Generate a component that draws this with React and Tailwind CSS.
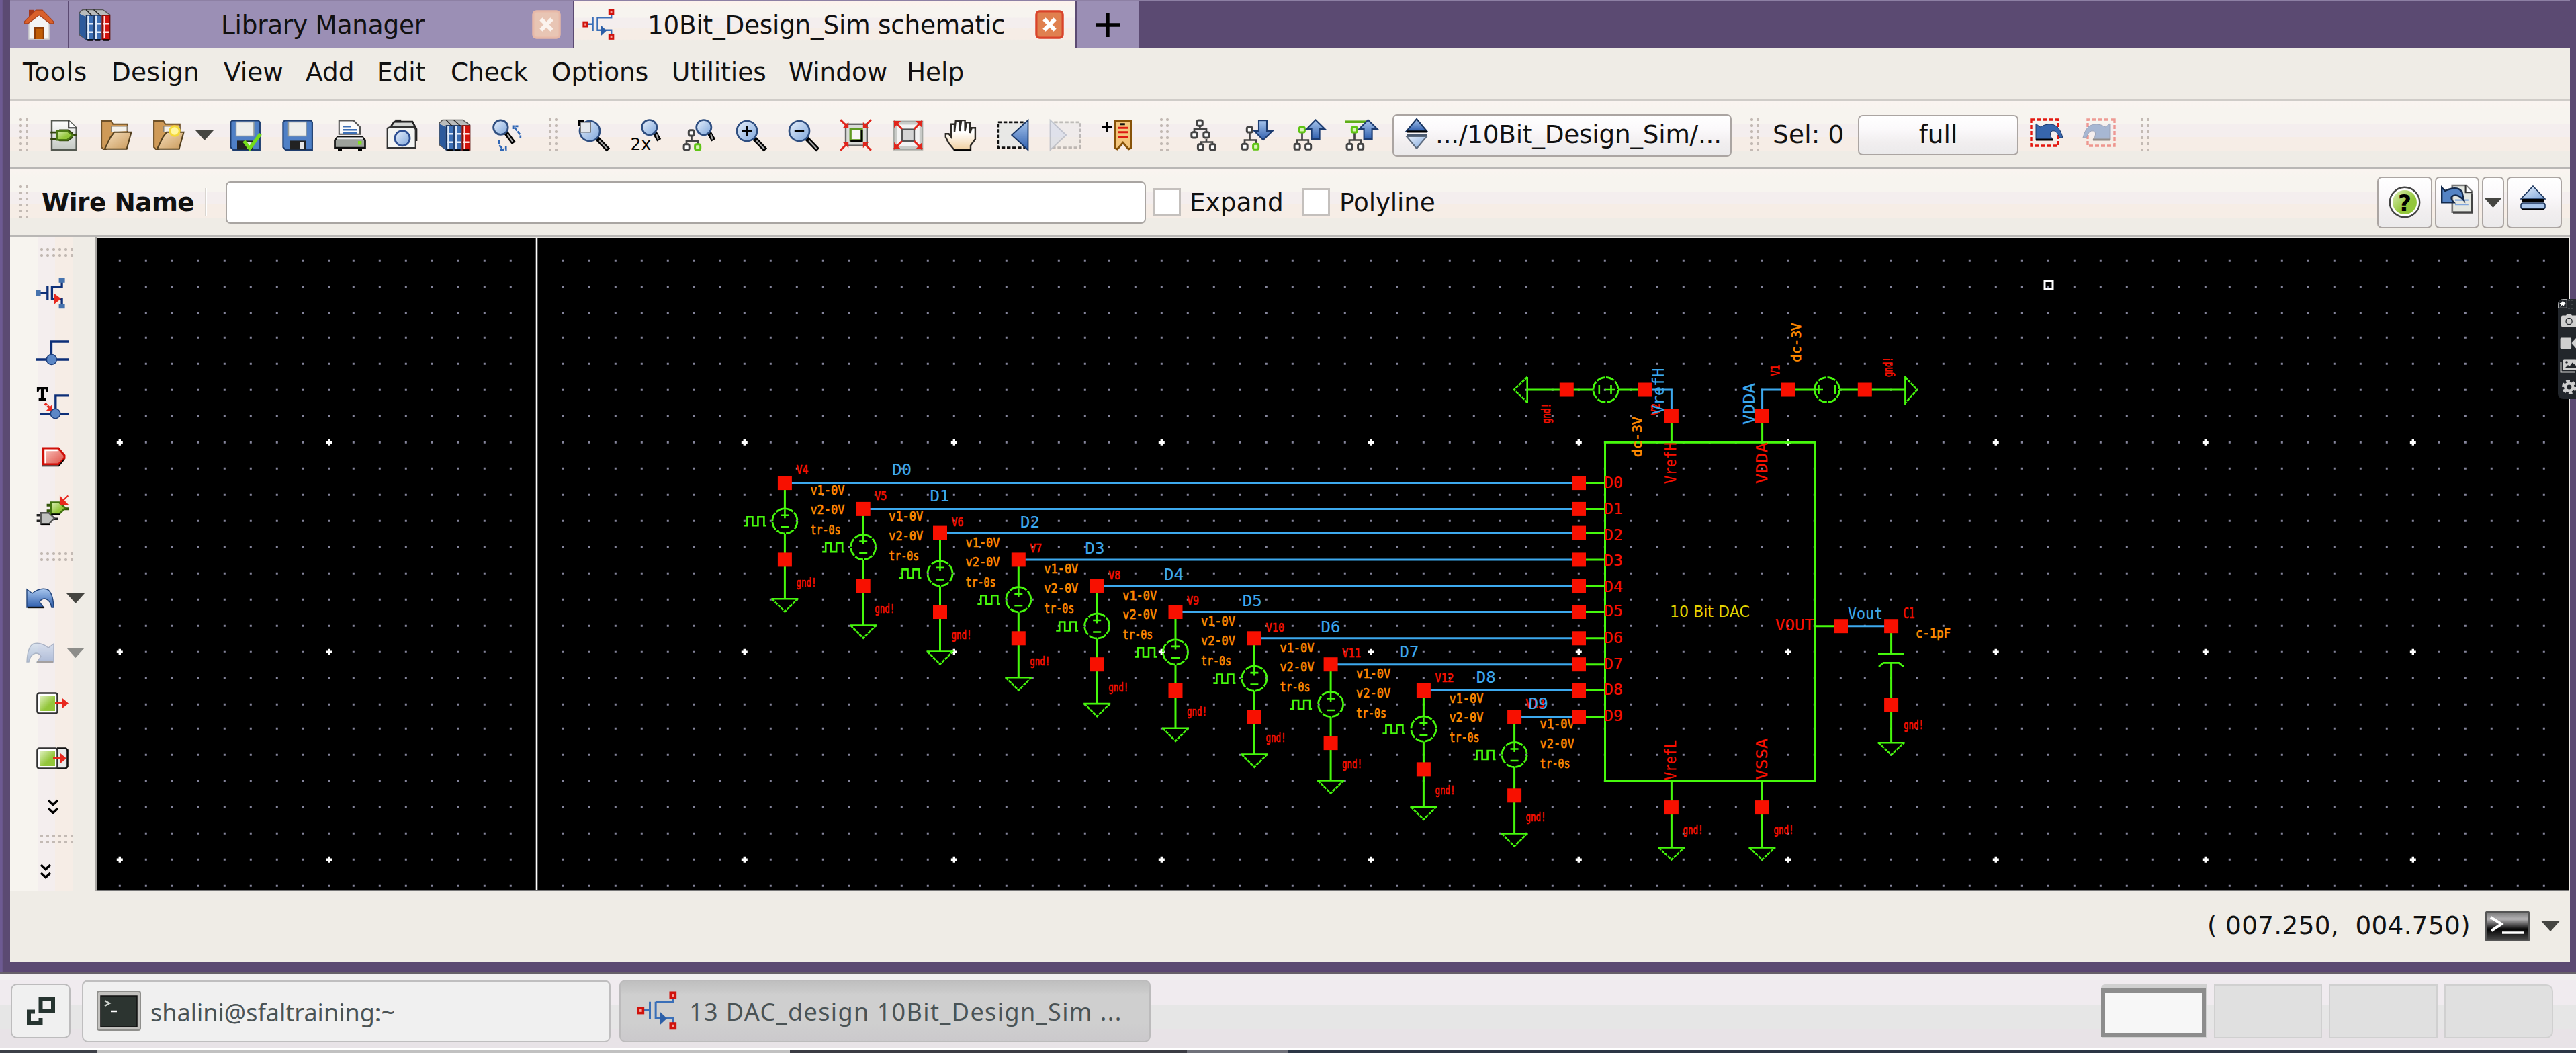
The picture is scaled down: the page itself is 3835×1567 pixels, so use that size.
import React from "react";

const BAND_Y =
  "bg-[linear-gradient(to_bottom,#faf4f0_0%,#f7f4ef_12%,#f7f4ef_35%,#f4eeee_35%,#f4eeee_54%,#f6ede6_54%,#f6ede6_74%,#efece6_74%)]";
const BAND_TAB =
  "bg-[linear-gradient(to_bottom,#fdf2ec_0%,#f7f4ef_14%,#f7f4ef_34%,#f4eeee_36%,#f4eeee_56%,#f6ede6_58%,#f6ede6_80%,#efece6_84%)]";
const BAND_X =
  "bg-[linear-gradient(to_right,#f7f4ef_0,#f7f4ef_41px,#f4eeee_41px,#f4eeee_67px,#f6ede6_67px,#f6ede6_93px,#efece6_93px)]";
const BUTTON =
  "shrink-0 border-2 border-[#aba5a2] rounded-[7px] bg-[linear-gradient(to_bottom,#ffffff,#fbf9fb_35%,#f1eeef_70%,#ebeaeb)]";
const UI = "font-['DejaVu_Sans',sans-serif] text-[37.4px] leading-none whitespace-pre text-[#111]";

/* ---------- icons, drawn on a 16 unit grid ---------- */
function Ic({ children, className = "w-12 h-12" }) {
  return (
    <svg viewBox="0 0 16 16" className={"shrink-0 block overflow-visible " + className}>
      {children}
    </svg>
  );
}

const Defs = () => (
  <svg className="absolute w-0 h-0">
    <defs>
      <linearGradient id="blue" x1="0" y1="0" x2="0" y2="1">
        <stop offset="0" stopColor="#a9c7ee" />
        <stop offset="1" stopColor="#2f5fae" />
      </linearGradient>
      <linearGradient id="lens" x1="0" y1="0" x2="1" y2="1">
        <stop offset="0" stopColor="#e9f1fb" />
        <stop offset="1" stopColor="#7ea6dc" />
      </linearGradient>
      <linearGradient id="tan" x1="0" y1="0" x2="1" y2="1">
        <stop offset="0" stopColor="#f6dfbd" />
        <stop offset="1" stopColor="#c99a5b" />
      </linearGradient>
      <linearGradient id="grn" x1="0" y1="0" x2="1" y2="1">
        <stop offset="0" stopColor="#dcefb8" />
        <stop offset="0.6" stopColor="#93c63a" />
      </linearGradient>
      <linearGradient id="redg" x1="0" y1="0" x2="1" y2="1">
        <stop offset="0" stopColor="#fbc9c4" />
        <stop offset="1" stopColor="#dd4a3f" />
      </linearGradient>
      <linearGradient id="silver" x1="0" y1="0" x2="0" y2="1">
        <stop offset="0" stopColor="#ffffff" />
        <stop offset="1" stopColor="#c3c8c2" />
      </linearGradient>
      <linearGradient id="hand" x1="0" y1="0" x2="0" y2="1">
        <stop offset="0.4" stopColor="#ffffff" />
        <stop offset="1" stopColor="#f0cf9e" />
      </linearGradient>
      <linearGradient id="term" x1="0" y1="0" x2="0" y2="1">
        <stop offset="0" stopColor="#777" />
        <stop offset="0.25" stopColor="#b5b3b5" />
        <stop offset="0.6" stopColor="#050505" />
        <stop offset="1" stopColor="#4a4a4a" />
      </linearGradient>
    </defs>
  </svg>
);

const Home = () => (
  <Ic>
    <rect x="3" y="0.6" width="2.6" height="5" fill="#a5381b" />
    <path d="M3 7 L8 3 L13 7 V15 H3Z" fill="#f4f4f4" stroke="#cfcfcf" strokeWidth="0.5" />
    <path d="M0.8 6.3 L6.5 0.7 H9.7 L15.2 6.3 V7.3 L13.5 7.3 L8.1 3.2 L2.6 7.3 H0.8Z" fill="#d9602b" stroke="#a8411d" strokeWidth="0.4" />
    <rect x="5.6" y="9" width="5" height="6" fill="#8d3c07" />
    <rect x="6.5" y="9.9" width="3.4" height="5.1" fill="#c05d06" />
  </Ic>
);

const Books = () => (
  <Ic>
    <path d="M0.4 2 L2 0.5 H12 L15.5 3 V15.4 H4 L0.6 13Z" fill="#b9bcbc" stroke="#555" strokeWidth="0.5" />
    <path d="M0.5 2.5 L3.6 4 V15.4 L0.5 12.6Z" fill="#2c5a9c" />
    {[3.8, 7.7].map((x) => (
      <g key={x}>
        <rect x={x} y="3.3" width="3.5" height="12" fill="#3c6fb4" stroke="#13305e" strokeWidth="0.5" />
        <path d={`M${x + 0.3} 7.4 h3 M${x + 0.3} 11.6 h3 M${x + 1} 3.6 v11.4`} stroke="#dfeaf8" strokeWidth="0.8" />
      </g>
    ))}
    <rect x="11.7" y="3.3" width="3.8" height="12" fill="#d3120c" stroke="#7b0a06" strokeWidth="0.5" />
    <path d="M12 7.4 h3.2 M12 11.6 h3.2 M12.9 3.7 v11" stroke="#ffe1de" strokeWidth="0.8" />
    <path d="M3.7 0.5 l3 3 M7.5 0.5 l3.4 3" stroke="#222" strokeWidth="0.5" />
    <path d="M4.4 15.5 h2.6 M8.2 15.5 h2.6 M12.2 15.5 h2.8" stroke="#000" strokeWidth="0.9" />
  </Ic>
);

const MosRed = ({ className }) => (
  <Ic className={className}>
    <path d="M2.5 7.6 H5 M5.2 4.2 V11 M7.5 4.2 V11 M7.5 4.4 H14.4 V2.5 M7.5 10.6 H14.4 V13" stroke="#3a6fb8" strokeWidth="0.8" fill="none" />
    <path d="M9.2 8.2 L12 10.8 L9.2 13.4Z" fill="#2c5fa8" />
    {[[0.6, 6.7], [13.4, 0.6], [13.4, 12.8]].map(([x, y]) => (
      <rect key={x + "-" + y} x={x} y={y} width="1.9" height="2" fill="#f6a39b" stroke="#d0120c" strokeWidth="0.95" />
    ))}
  </Ic>
);

const Close = ({ dim }) => (
  <Ic className="w-[43px] h-[43px]">
    <rect x="0.7" y="0.7" width="14.6" height="14.6" rx="1.8" fill={dim ? "#e8c5b4" : "#e0804f"} stroke={dim ? "#e7b9a8" : "#d9432a"} strokeWidth="1.2" />
    <path d="M5 5 L11 11 M11 5 L5 11" stroke={dim ? "#fbf3ee" : "#fff"} strokeWidth="2.2" />
  </Ic>
);

const NewDoc = () => (
  <Ic>
    <path d="M2 0.8 H10.4 L14.2 4.4 V15.3 H2Z" fill="url(#silver)" stroke="#555a52" strokeWidth="0.8" />
    <path d="M10.4 0.8 V4.4 H14.2" fill="#fff" stroke="#333" strokeWidth="0.7" />
    <path d="M1.4 6.7 H5 L6 5.6 H10 L12 7 V8 H14.4 M1.4 10 H5 L6 10.6 H10 L12.4 9" stroke="#33440f" strokeWidth="0.9" fill="none" />
    <path d="M4.6 5.9 H9.6 L12.4 8.2 L9.6 10.4 H4.6Z" fill="url(#grn)" stroke="#4c7a14" strokeWidth="0.8" />
  </Ic>
);

const Folder = ({ star }) => (
  <Ic>
    <path d="M0.7 1 H5.4 L6.4 2.6 H13.6 V9 L3 15 H1.6 L0.7 14Z" fill="#cf9a57" stroke="#6e5129" strokeWidth="0.7" />
    <path d="M5.6 6.6 V3.6 H13.4 V6" fill="#f4f1ea" stroke="#8b8272" strokeWidth="0.5" />
    <path d="M2.3 14.9 L5.2 9 L7 6.6 H15.5 L13.2 14.9Z" fill="url(#tan)" stroke="#54401f" strokeWidth="0.7" />
    {star && <circle cx="11" cy="6" r="2.4" fill="#fff7a0" stroke="#f5d93a" strokeWidth="1" />}
  </Ic>
);

const Disk = ({ check }) => (
  <Ic>
    <path d="M0.8 1.6 L1.6 0.8 H14.6 L15.3 1.6 V15.3 H2 L0.8 14Z" fill="#4f80c6" stroke="#1e3d6e" strokeWidth="0.7" />
    <rect x="3.5" y="1.5" width="8.8" height="7" fill="#eceeec" stroke="#9aa09a" strokeWidth="0.5" />
    <rect x="4" y="10.8" width="8" height="4.4" fill="#222" />
    <rect x="9" y="11.6" width="2.2" height="3.2" fill="#e6e6e6" />
    {check && <path d="M7.4 11 L10.2 14.6 L15.6 7.4" stroke="#74dc18" strokeWidth="1.7" fill="none" />}
  </Ic>
);

const Printer = () => (
  <Ic>
    <path d="M2.6 7.6 V0.8 H9.8 L13 4 V7.6Z" fill="#fbfbfb" stroke="#555" strokeWidth="0.7" />
    <path d="M4.4 3.8 h4 M4.4 5.4 h7 M4.4 7 h7" stroke="#3d6fb5" strokeWidth="0.8" />
    <path d="M2 8.8 H14 L15.5 10.6 V14.4 H0.5 V10.6Z" fill="#9da19b" stroke="#111" strokeWidth="0.9" />
    <path d="M1.5 9.6 H14.4" stroke="#eee" strokeWidth="0.9" />
    <rect x="12" y="11" width="1.8" height="1.8" fill="#7fe01c" />
    <path d="M2 15.3 h2 M12 15.3 h2" stroke="#000" strokeWidth="1.3" />
  </Ic>
);

const Camera = () => (
  <Ic>
    <path d="M2.5 3.4 L4 1.4 H13 L15 5 V11" fill="#d3d5d2" stroke="#222" strokeWidth="0.9" />
    <rect x="4.4" y="0.3" width="3" height="1.4" fill="#222" />
    <path d="M0.6 4.6 L2 4 H13.4 L14.6 5 V14.4 H0.6Z" fill="#f3f4f2" stroke="#333" strokeWidth="0.8" />
    <circle cx="8" cy="9.6" r="3.7" fill="url(#lens)" stroke="#2d4f93" strokeWidth="0.9" />
  </Ic>
);

const Mag = ({ cx, cy, r, tx, ty }) => (
  <g>
    <path d={`M${cx + r * 0.7} ${cy + r * 0.7} L${tx} ${ty}`} stroke="#000" strokeWidth="2.3" />
    <path d={`M${cx + r * 0.95} ${cy + r * 0.95} L${tx - 0.5} ${ty - 0.5}`} stroke="#aaa" strokeWidth="0.7" />
    <circle cx={cx} cy={cy} r={r} fill="url(#lens)" stroke="#2f4e80" strokeWidth="0.9" />
  </g>
);

const Search = () => (
  <Ic>
    <Mag cx={4.8} cy={4.2} r={3.6} tx={11.3} ty={12} />
    <path d="M11 5 V3.6 H13.5 M11.6 4.2 L14.6 8 V9.4 M4 10.6 V13 L6 15 M4.6 15.2 H7.4 V13" stroke="#2f66b5" strokeWidth="0.9" fill="none" strokeDasharray="2 0.5" />
  </Ic>
);
const ZoomFit = () => (
  <Ic>
    <Mag cx={6} cy={6} r={5} tx={15.2} ty={15.4} />
    <rect x="1.4" y="1.6" width="5" height="5" fill="#e3e7ec" stroke="#777" strokeWidth="0.5" />
    <path d="M0.5 3.4 V1 H3" stroke="#000" strokeWidth="1" fill="none" />
  </Ic>
);
const Zoom2x = () => (
  <Ic>
    <Mag cx={9.6} cy={4.2} r={3.7} tx={14.4} ty={10.6} />
    <text x="0.2" y="15.2" fontSize="8.4" fontFamily="DejaVu Sans, sans-serif" textLength="10.2" lengthAdjust="spacingAndGlyphs">2x</text>
  </Ic>
);
const Node = ({ x, y, green }) => (
  <rect x={x} y={y} width="2.7" height="2.7" rx="0.8" fill={green ? "#d9f5b5" : "#fff"} stroke={green ? "#5fc414" : "#444"} strokeWidth="1" />
);
const ZoomHier = () => (
  <Ic>
    <Mag cx={10.6} cy={4.2} r={3.7} tx={15.4} ty={10.6} />
    <path d="M4.5 8 V11 M2 13 V11 H7.6 V13" stroke="#444" strokeWidth="0.9" fill="none" />
    <Node x={3.1} y={5.6} />
    <Node x={0.7} y={12.6} />
    <Node x={6.2} y={12.6} green />
  </Ic>
);
const ZoomSign = ({ plus }) => (
  <Ic>
    <Mag cx={6} cy={6} r={5} tx={15.2} ty={15.4} />
    <path d={plus ? "M3.6 6 H8.4 M6 3.6 V8.4" : "M3.6 6 H8.4"} stroke="#000" strokeWidth="1.2" />
  </Ic>
);
const FitAll = () => (
  <Ic>
    <rect x="3" y="2.6" width="10.6" height="10.6" fill="#d9dbd8" stroke="#666" strokeWidth="0.8" />
    <rect x="5.4" y="5" width="5.6" height="5.6" fill="#f6f6f6" stroke="#5f9a21" strokeWidth="1.1" />
    <path d="M11 5.4 V11 H5.4" stroke="#000" strokeWidth="1" fill="none" />
    <path d="M0.4 0.4 L4 4 M15.6 0.4 L12 4 M0.4 15.6 L4 12 M15.6 15.6 L12 12" stroke="#e1251b" strokeWidth="1" />
    <path d="M4.4 4.4 H1.6 L4.4 1.6Z M11.6 4.4 V1.6 L14.4 4.4Z M4.4 11.6 V14.4 L1.6 11.6Z M11.6 11.6 H14.4 L11.6 14.4Z" fill="#e1251b" />
  </Ic>
);
const FitSel = () => (
  <Ic>
    <rect x="0.9" y="1.2" width="14.2" height="14" fill="#c9cbc8" stroke="#a5a8a4" strokeWidth="0.7" />
    <rect x="2.4" y="2.8" width="11.2" height="10.6" fill="#f3f3f3" />
    <rect x="5" y="5.2" width="6" height="5.8" fill="#d5d5d5" stroke="#555" strokeWidth="0.8" />
    <path d="M1 1 L5 5 M15 1 L11 5 M1 15 L5 11 M15 15 L11 11" stroke="#e1251b" strokeWidth="1" />
    <path d="M1 1 H4.4 L1 4.4Z M15 1 V4.4 L11.6 1Z M1 15 V11.6 L4.4 15Z M15 15 H11.6 L15 11.6Z" fill="#e1251b" />
  </Ic>
);
const Hand = () => (
  <Ic>
    <path
      d="M5 15.5 L2 11.8 L0.6 9 V7.4 H2.2 L3.4 9 V2.6 H5 V6.6 L5.6 0.9 H7.6 V6 L8.4 0.7 H10.2 V6 L11 1.8 H12.7 V7 L13.6 4.4 H15.3 V10 L13 13.2 V15.5Z"
      fill="url(#hand)"
      stroke="#2d2a26"
      strokeWidth="0.8"
    />
    <path d="M5 15.5 H13" stroke="#000" strokeWidth="0.9" />
  </Ic>
);
const SelPrev = () => (
  <Ic>
    <rect x="0.6" y="1.6" width="13" height="12.6" fill="#e8e8e6" stroke="#111" strokeWidth="0.9" strokeDasharray="1.8 0.9" />
    <path d="M15.5 0.6 V15.4 L7.4 8Z" fill="url(#blue)" stroke="#163463" strokeWidth="0.6" />
  </Ic>
);
const SelNext = () => (
  <Ic className="w-12 h-12 opacity-35">
    <rect x="2.4" y="1.6" width="13" height="12.6" fill="#e8e8e6" stroke="#555" strokeWidth="0.9" strokeDasharray="1.8 0.9" />
    <path d="M0.5 0.6 V15.4 L8.4 8Z" fill="#b9cbe6" stroke="#5f7393" strokeWidth="0.6" />
  </Ic>
);
const Bookmark = () => (
  <Ic>
    <path d="M0.2 4 H5 M2.6 1.6 V6.4" stroke="#000" strokeWidth="1" />
    <path d="M6.6 1 H14.6 V14.4 L13.4 15 L10.6 11.8 L7.8 15 L6.6 14.4Z" fill="#f3c67c" stroke="#875309" strokeWidth="1" />
    <path d="M8 4.4 h5.2 M8 6.6 h5.2 M8 8.8 h5.2" stroke="#dd1b12" strokeWidth="1" />
    <path d="M9.2 2.6 h2.4" stroke="#111" strokeWidth="1" />
  </Ic>
);
const Hier = () => (
  <Ic>
    <path d="M5.8 3 V5 M3 7.6 V5 H9 V8 M9 10 V11.5 M6.4 13.4 V11.5 H12 V13.4" stroke="#444" strokeWidth="0.9" fill="none" />
    <Node x={4.4} y={0.7} />
    <Node x={1.6} y={6.6} />
    <Node x={7.6} y={6.6} />
    <Node x={4.8} y={12.6} />
    <Node x={10.8} y={12.6} />
  </Ic>
);
const HierMove = ({ down, top }) => (
  <Ic>
    <path d="M4.5 5.5 V10.5 M2 13 V10.5 H7.6 V13" stroke="#444" strokeWidth="0.9" fill="none" />
    <Node x={3.1} y={4} green={!down} />
    <Node x={0.7} y={12.4} />
    <Node x={6.2} y={12.4} green={down} />
    {top && <path d="M0 1.4 H10" stroke="#5fae18" strokeWidth="1.2" />}
    <path
      d={down ? "M9 0.7 H13 V6 H15.8 L11.2 10.4 L6.8 6 H9Z" : "M9.2 10 H13.2 V5 H15.8 L11.2 0.5 L6.8 5 H9.2Z"}
      fill="url(#blue)"
      stroke="#1d3c70"
      strokeWidth="0.7"
    />
  </Ic>
);
const UpDown = () => (
  <svg viewBox="0 0 34 46" className="w-[34px] h-[46px] shrink-0 block">
    <path d="M17 1 L32 19 H2Z" fill="url(#blue)" stroke="#18345f" strokeWidth="2" />
    <path d="M2 20 H32" stroke="#000" strokeWidth="3" />
    <path d="M17 45 L32 27 H2Z" fill="url(#lens)" stroke="#5c6a7d" strokeWidth="2" />
    <path d="M2 25 H32" stroke="#4a5a70" strokeWidth="2" />
  </svg>
);
const SelUndo = ({ redo }) => (
  <svg viewBox="0 0 50 46" className={"w-[50px] h-[46px] shrink-0 block " + (redo ? "-scale-x-100 opacity-40" : "")}>
    <rect x="2" y="3" width="40" height="39" fill="none" stroke="#e3170f" strokeWidth="3.4" strokeDasharray="6 3" />
    <path d="M9 9 L15 14 Q30 6 40 13 Q46 18 49 30 H44 Q40 18 33 20 Q27 23 34 33 H9Z" fill="#3766ad" stroke="#1c3a6c" strokeWidth="1" />
    <path d="M9 33 H34" stroke="#000" strokeWidth="3" />
  </svg>
);

const Mos = () => (
  <Ic>
    <path d="M2 7.6 H5.4 M5.6 4.2 V11.2 M7.8 11 V4.6 H12.7 V2 M7.8 10.6 H12.7 V14" stroke="#0d2f78" strokeWidth="1.1" fill="none" />
    <path d="M9 8 L12.3 10.5 L9 13.2Z" fill="#e8281e" />
    <rect x="0" y="6" width="2.2" height="3.2" fill="#4673ae" />
    <rect x="11.2" y="0.2" width="3" height="2.4" fill="#4673ae" />
    <rect x="11.2" y="13.2" width="3" height="2.2" fill="#4673ae" />
  </Ic>
);
const WireIc = () => (
  <Ic>
    <path d="M0 11 H16 M7.5 11 V2 H16" stroke="#0d2f78" strokeWidth="1.1" fill="none" />
    <circle cx="7.6" cy="11" r="2.5" fill="#5c87c6" stroke="#1d3f7d" strokeWidth="0.5" />
  </Ic>
);
const WireName = () => (
  <Ic>
    <path d="M0.3 0.3 H6 V3 H5.2 L4.6 1.4 H4 V6 H5 V7 H1.2 V6 H2.3 V1.4 H1.6 L1 3 H0.3Z" fill="#000" />
    <path d="M2 13.6 H16 M9.6 13.6 V4.6 H16" stroke="#0d2f78" strokeWidth="1.1" fill="none" />
    <path d="M4.3 8.4 L7 11" stroke="#e8281e" strokeWidth="1.2" strokeDasharray="1.3 0.4" />
    <path d="M8 8.8 V12.2 H4.8Z" fill="#e8281e" />
    <circle cx="9.5" cy="13.5" r="2.4" fill="#5c87c6" stroke="#1d3f7d" strokeWidth="0.5" />
  </Ic>
);
const PinIc = () => (
  <Ic>
    <path d="M3.5 4 H11 L14 7.5 V9 L11 12 H3.5Z" fill="url(#redg)" stroke="#cf0f08" strokeWidth="1" />
    <path d="M4.6 11.4 V5 H10.6" stroke="#fff" strokeWidth="0.8" fill="none" />
    <path d="M3 12.8 H11.2 L14 9.4" stroke="#000" strokeWidth="0.6" fill="none" />
  </Ic>
);
const Plug = () => (
  <Ic>
    <path d="M0.2 10.6 H3 M0.2 13.4 H3 M8 12.4 H11" stroke="#222" strokeWidth="1.2" />
    <path d="M2.4 9.4 H6.2 L9 12 L6.2 15 H2.4Z" fill="#bfc0bf" stroke="#555" strokeWidth="0.8" />
    <path d="M2.4 15.3 H7" stroke="#000" strokeWidth="0.8" />
    <path d="M5.2 5.6 H8 M5.2 8.4 H8 M13 7.4 H16" stroke="#33560a" strokeWidth="1.3" />
    <path d="M7.4 4.2 H11.4 L14.4 7 L11.4 10 H7.4Z" fill="url(#grn)" stroke="#41730e" strokeWidth="0.9" />
    <path d="M7.4 10.2 H12" stroke="#000" strokeWidth="0.8" />
    <path d="M12 1.6 V5 H15.2Z M15.8 0.8 L13 3.6" fill="#e8281e" stroke="#e8281e" strokeWidth="0.7" />
  </Ic>
);
const UndoIc = ({ redo }) => (
  <svg viewBox="0 0 42 32" className={"w-[42px] h-[32px] shrink-0 block " + (redo ? "-scale-x-100 opacity-35" : "")}>
    <path d="M1 3 L9 9 Q20 0 31 3 Q40 7 41 30 H38 Q36 19 28 17 Q22 17 20 22 L26 30 H1Z" fill="url(#blue)" stroke="#23457c" strokeWidth="1.4" />
    <path d="M2 30 H26" stroke="#111" strokeWidth="2.4" />
  </svg>
);
const Caret = ({ dim, className = "w-[27px] h-[15px]" }) => (
  <svg viewBox="0 0 27 15" className={"shrink-0 block " + className}>
    <path d="M0 0 H27 L13.5 15Z" fill={dim ? "#8d8d8a" : "#454541"} />
  </svg>
);
const GreenBox = ({ wide }) => (
  <svg viewBox="0 0 48 33" className="w-12 h-[33px] shrink-0 block">
    {wide && <path d="M31 1.5 H44 L46.5 4 V29 L44 31.5 H31" fill="#e9e9e9" stroke="#111" strokeWidth="2.6" />}
    <rect x="1.5" y="1.5" width="30" height="30" rx="3" fill="#fff" stroke="#333" strokeWidth="2.6" />
    <rect x="6" y="6" width="22" height="22" fill="url(#grn)" />
    <path d={wide ? "M25 16.5 H38" : "M28 16.5 H41"} stroke="#e8281e" strokeWidth="3" />
    <path d={wide ? "M36 9 L45 16.5 L36 24Z" : "M39 9 L48 16.5 L39 24Z"} fill="#e8281e" />
  </svg>
);
const Chevrons = () => (
  <svg viewBox="0 0 16 24" className="w-4 h-6 shrink-0 block">
    <path d="M1 2 L8 8.5 L15 2 M1 14 L8 20.5 L15 14" stroke="#000" strokeWidth="3.6" fill="none" />
  </svg>
);
const Help = () => (
  <Ic>
    <circle cx="8" cy="8" r="7.4" fill="#fff" stroke="#444" strokeWidth="0.8" />
    <circle cx="8" cy="8" r="6" fill="url(#grn)" />
    <text x="8" y="12.2" fontSize="11.5" fontWeight="bold" textAnchor="middle" fontFamily="DejaVu Sans, sans-serif">?</text>
  </Ic>
);
const Restore = () => (
  <Ic>
    <path d="M5.6 1 H12.4 L15.4 4 V14.2 H5.6Z" fill="#e4e7e1" stroke="#777" strokeWidth="0.9" />
    <path d="M12.2 1 V4.4 H15.4" fill="#fff" stroke="#333" strokeWidth="0.7" />
    <path d="M15.4 5 V14.4 H6" stroke="#444" strokeWidth="1" fill="none" />
    <path d="M7 8.2 h6.6 M7 10.4 h6.6" stroke="#7fa6dd" strokeWidth="0.7" />
    <path d="M0.4 2 L2 3.6 Q8 1 10.4 4 L11.4 8.4 Q8 4.6 5.4 6.4 Q4.6 7.6 6.4 9.4 H0.4Z" fill="#5483c4" stroke="#142a4c" strokeWidth="0.8" />
  </Ic>
);
const Eject = () => (
  <svg viewBox="0 0 40 38" className="w-[40px] h-[38px] shrink-0 block">
    <path d="M20 1 L38 20 H2Z" fill="url(#lens)" stroke="#1c355c" strokeWidth="1.6" />
    <path d="M3 22 H37" stroke="#000" strokeWidth="4" />
    <rect x="2" y="26" width="36" height="9" rx="3" fill="#a9c5ea" stroke="#1c355c" strokeWidth="1.6" />
    <path d="M4 35.6 H37" stroke="#000" strokeWidth="2.2" />
  </svg>
);

function Grip({ horizontal }) {
  return (
    <span
      className={
        "shrink-0 block bg-[radial-gradient(circle_at_2px_2px,#c3bab4_1.9px,transparent_2.3px)] bg-[size:9px_9px] " +
        (horizontal ? "w-[52px] h-[15px]" : "w-[15px] h-[51px]")
      }
    />
  );
}

/* ---------- schematic ---------- */
const G = "#46f80c";
const R = "#f81000";
const B = "#3da9ee";
const O = "#ff8a00";
const MONO = "'DejaVu Sans Mono', monospace";

const gridX = (i) => 178.3 + 3 * Math.floor(12.93 * i + 0.62);
const gridY = (j) => 658.3 + 3 * Math.floor(12.93 * j + 0.71);

function GridDots() {
  const dots = [];
  const marks = [];
  for (let i = 0; i <= 93; i++) {
    for (let j = -7; j <= 17; j++) {
      const x = gridX(i);
      const y = gridY(j);
      if (i % 8 === 0 && j % 8 === 0) {
        if (i !== 16) marks.push(`M${x - 4.5} ${y}h9M${x} ${y - 4.5}v9`);
      } else if (i !== 16) {
        dots.push(`M${x - 1.5} ${y}h3`);
      }
    }
  }
  return (
    <>
      <path d={dots.join("")} stroke="#85859c" strokeWidth="3" />
      <path d={marks.join("")} stroke="#ffffff" strokeWidth="3.4" />
    </>
  );
}

const Sq = ({ x, y }) => <rect x={x - 10.5} y={y - 10.5} width="21" height="21" fill={R} />;
const T = ({ x, y, w, c, s = 23, children, rot, a = "middle" }) => (
  <text
    x={x}
    y={y}
    fill={c}
    stroke={c}
    strokeWidth={s < 22 ? 0.7 : 0.2}
    fontSize={s}
    fontFamily={MONO}
    textAnchor={a}
    textLength={w}
    lengthAdjust="spacingAndGlyphs"
    dominantBaseline="central"
    transform={rot ? `rotate(-90 ${x} ${y})` : undefined}
  >
    {children}
  </text>
);
const Gnd = ({ x, y, h = 19 }) => (
  <>
    <path d={`M${x - 20} ${y}H${x + 20}`} stroke={G} strokeWidth="2.6" />
    <path d={`M${x - 19} ${y}L${x} ${y + h}L${x + 19} ${y}`} stroke={G} strokeWidth="2.6" fill="none" strokeDasharray="5 1.2" />
  </>
);
const Circ = ({ x, y }) => <circle cx={x} cy={y} r="18.5" fill="none" stroke={G} strokeWidth="2.8" strokeDasharray="12.6 1.93" />;

/* x, pin y, source y, lower pin y, ground y, source label, wire label, wire label x / y, port label y */
const SOURCES = [
  [1168.4, 718.6, 775.3, 832.9, 891.3, "V4", "D0", 1342.5, 699, 717.5],
  [1285.2, 757.4, 814.1, 871.7, 930.6, "V5", "D1", 1399, 738, 757],
  [1399.5, 793.1, 853.4, 910.5, 969.5, "V6", "D2", 1533.5, 777, 796],
  [1516.3, 832.9, 892.2, 949.8, 1008.3, "V7", "D3", 1630, 816, 834],
  [1633.2, 871.7, 931.5, 988.7, 1047.1, "V8", "D4", 1747.5, 855.2, 873],
  [1750, 910.5, 970.4, 1027.5, 1083.8, "V9", "D5", 1864.3, 894, 909],
  [1867.4, 949.8, 1009.6, 1066.8, 1122.6, "V10", "D6", 1981, 933.3, 949],
  [1981.1, 988.7, 1048, 1105.6, 1161.4, "V11", "D7", 2098, 969.5, 987.5],
  [2119.4, 1027.5, 1084.6, 1144.9, 1200.7, "V12", "D8", 2212.2, 1008, 1026],
  [2254.6, 1066.8, 1123, 1183.8, 1240.4, "V13", "D9", 2290.3, 1046.7, 1064.5],
];

function Source({ d }) {
  const [x, y1, yc, y2, yg, name] = d;
  return (
    <g>
      <path d={`M${x} ${y1}V${yc - 17}M${x} ${yc + 19}V${yg}`} stroke={G} strokeWidth="3" />
      <Circ x={x} y={yc} />
      <path d={`M${x - 6} ${yc - 8.5}h12M${x} ${yc - 17}v13M${x - 6} ${yc + 9}h12`} stroke={G} strokeWidth="2.6" />
      <path d={`M${x - 61} ${yc + 7}h5v-13h8v13h8v-13h9v13h3`} stroke={G} strokeWidth="2.6" fill="none" />
      <Sq x={x} y={y1} />
      <Sq x={x} y={y2} />
      <Gnd x={x} y={yg} />
      <T x={x + 17} y={yc - 76.5} w={name.length > 2 ? 28 : 18} c={R} s={18} a="start">{name}</T>
      <T x={x + 38} y={yc - 46} w={51} c={O} s={19} a="start">v1-0V</T>
      <T x={x + 38} y={yc - 17.5} w={51} c={O} s={19} a="start">v2-0V</T>
      <T x={x + 38} y={yc + 12.5} w={45} c={O} s={19} a="start">tr-0s</T>
      <T x={x + 17} y={yg - 25} w={30} c={R} s={18} a="start">gnd!</T>
    </g>
  );
}

function Schematic() {
  return (
    <svg viewBox="144 354 3681 971" className="block w-[3681px] h-[971px] bg-black shrink-0">
      <GridDots />
      <path d="M799 354V1325" stroke="#fff" strokeWidth="2.6" />
      <rect x="3044" y="418" width="12" height="12" fill="none" stroke="#fff" strokeWidth="3" />

      <rect x="2389.5" y="658.3" width="312.7" height="503.7" fill="none" stroke={G} strokeWidth="3" />
      {SOURCES.map((d) => (
        <g key={d[5]}>
          <path d={`M${d[0]} ${d[1]}H2350.5`} stroke={B} strokeWidth="3" />
          <path d={`M2350.5 ${d[1]}H2389.5`} stroke={G} strokeWidth="3" />
        </g>
      ))}
      {SOURCES.map((d) => (
        <Source key={d[5]} d={d} />
      ))}
      {SOURCES.map((d) => (
        <g key={d[5]}>
          <Sq x={2350.5} y={d[1]} />
          <T x={d[7]} y={d[8]} w={29} c={B}>{d[6]}</T>
          <T x={2402} y={d[9]} w={28} c={R}>{d[6]}</T>
        </g>
      ))}

      {/* VrefH supply */}
      <path d="M2273.7 580H2372M2409 580H2449M2488.4 619V658" stroke={G} strokeWidth="3" />
      <path d="M2449 580H2488.4V619" stroke={B} strokeWidth="3" fill="none" />
      <path d="M2273.7 561V599" stroke={G} strokeWidth="2.6" />
      <path d="M2273.7 561L2254 580L2273.7 599" stroke={G} strokeWidth="2.6" fill="none" strokeDasharray="5 1.2" />
      <Circ x={2390.5} y={580} />
      <path d="M2380.8 573v13M2390 580h15M2398.5 573v13" stroke={G} strokeWidth="2.6" />
      <Sq x={2332.3} y={580} />
      <Sq x={2449.2} y={580} />
      <Sq x={2488.4} y={619} />
      <T x={2464} y={609} w={18} c={R} s={18} rot>V2</T>
      <T x={2469} y={582} w={69} c={B} rot>VrefH</T>
      <T x={2301} y={615} w={30} c={R} s={18} rot>gnd!</T>
      <T x={2436.5} y={650} w={60} c={O} s={20} rot>dc-3V</T>
      <T x={2487.4} y={689} w={62} c={R} rot>VrefH</T>

      {/* VDDA supply */}
      <path d="M2662 580H2702M2738 580H2836M2623.6 619V658" stroke={G} strokeWidth="3" />
      <path d="M2623.6 619V580H2662" stroke={B} strokeWidth="3" fill="none" />
      <path d="M2836.4 560V602" stroke={G} strokeWidth="2.6" />
      <path d="M2836.4 561L2854 580L2836.4 600" stroke={G} strokeWidth="2.6" fill="none" strokeDasharray="5 1.2" />
      <Circ x={2720} y={580} />
      <path d="M2731.7 573v13M2700 580h14M2707.5 573v13" stroke={G} strokeWidth="2.6" />
      <Sq x={2662.4} y={580} />
      <Sq x={2776.3} y={580} />
      <Sq x={2623.2} y={619} />
      <T x={2642.6} y={551} w={17} c={R} s={18} rot>V1</T>
      <T x={2604} y={601} w={62} c={B} rot>VDDA</T>
      <T x={2673.6} y={509.4} w={58} c={O} s={20} rot>dc-3V</T>
      <T x={2810.8} y={546} w={30} c={R} s={18} rot>gnd!</T>
      <T x={2622.5} y={689} w={62} c={R} rot>VDDA</T>

      {/* lower supplies */}
      {[2488.4, 2623.4].map((x) => (
        <g key={x}>
          <path d={`M${x} 1162V1261.4`} stroke={G} strokeWidth="3" />
          <Sq x={x} y={1201.6} />
          <Gnd x={x} y={1261.4} h={18} />
          <T x={x + 17} y={1234.5} w={30} c={R} s={18} a="start">gnd!</T>
        </g>
      ))}
      <T x={2487.4} y={1131} w={60} c={R} rot>VrefL</T>
      <T x={2622.5} y={1129.5} w={62} c={R} rot>VSSA</T>

      {/* output load */}
      <path d="M2702 931.7H2740.5M2815.6 931.7V973.4M2815.6 985V1105" stroke={G} strokeWidth="3" />
      <path d="M2740.5 931.7H2815.6" stroke={B} strokeWidth="3" />
      <path d="M2796 973.4H2835M2797 992L2804 986.4H2827L2834 992" stroke={G} strokeWidth="2.8" fill="none" />
      <Sq x={2740.5} y={931.7} />
      <Sq x={2815.6} y={931.7} />
      <Sq x={2815.6} y={1048.6} />
      <Gnd x={2815.6} y={1105.2} h={18} />
      <T x={2834} y={1078.8} w={30} c={R} s={18} a="start">gnd!</T>
      <T x={2672} y={930} w={58} c={R}>VOUT</T>
      <T x={2777} y={913} w={52} c={B}>Vout</T>
      <T x={2842} y={912.6} w={17} c={R} s={21}>C1</T>
      <T x={2878} y={941.6} w={52} c={O} s={19}>c-1pF</T>
      <text x="2545.4" y="910" fill="#e2d400" fontSize="23.5" fontFamily="'DejaVu Sans', sans-serif" textAnchor="middle" textLength="119" lengthAdjust="spacingAndGlyphs" dominantBaseline="central">
        10 Bit DAC
      </text>
    </svg>
  );
}

/* ---------- window parts ---------- */
function TabBar() {
  return (
    <div className="flex h-[72px] border-t-2 border-[#8d80a4] bg-[#5b4a72]">
      <div className="w-[88px] border-r-2 border-[#5b4a72] bg-[#9b8fb5] flex items-center pl-[19px]">
        <Home />
      </div>
      <div className="w-[752px] border-r-2 border-[#5b4a72] bg-[#9b8fb5] flex items-center pl-[14px]">
        <Books />
        <span className={UI + " ml-[164px] mt-[2px] w-[463px] tracking-[-0.25px]"}>Library Manager</span>
        <span className="-mt-px"><Close dim /></span>
      </div>
      <div className={"w-[748px] border-r-2 border-[#5b4a72] flex items-center pl-[12px] " + BAND_TAB}>
        <MosRed className="w-12 h-12" />
        <span className={UI + " ml-[49px] mt-[2px] w-[577px] tracking-[-0.25px]"}>10Bit_Design_Sim schematic</span>
        <span className="-mt-px"><Close /></span>
      </div>
      <div className="w-[92px] bg-[#9b8fb5] flex items-center justify-center">
        <svg viewBox="0 0 36 36" className="w-9 h-9">
          <path d="M0 18H36M18 0V36" stroke="#000" strokeWidth="5.4" />
        </svg>
      </div>
    </div>
  );
}

function MenuBar() {
  return (
    <div className={"flex h-[76px] pl-[19px] pt-[17px] bg-[#efece6] " + UI}>
      <span className="w-[132px] tracking-[0.8px]">Tools</span>
      <span className="w-[167px] tracking-[0.3px]">Design</span>
      <span className="w-[122px]">View</span>
      <span className="w-[106px]">Add</span>
      <span className="w-[110px]">Edit</span>
      <span className="w-[150px]">Check</span>
      <span className="w-[179px]">Options</span>
      <span className="w-[174px]">Utilities</span>
      <span className="w-[176px]">Window</span>
      <span>Help</span>
    </div>
  );
}

function Toolbar() {
  return (
    <div className={"flex items-center h-[104px] border-t-[3px] border-b-[3px] border-t-[#cfccc8] border-b-[#b9b7b5] pl-[14px] pt-[2px] " + BAND_Y}>
      <Grip />
      <div className="flex items-center gap-[30px] ml-[27px]">
        <NewDoc />
        <Folder />
        <div className="flex items-center gap-4">
          <Folder star />
          <span className="-mr-[7px]"><Caret /></span>
        </div>
        <Disk check />
        <Disk />
        <Printer />
        <Camera />
        <Books />
        <Search />
      </div>
      <span className="ml-[38px]"><Grip /></span>
      <div className="flex items-center gap-[30px] ml-[28px]">
        <ZoomFit />
        <Zoom2x />
        <ZoomHier />
        <ZoomSign plus />
        <ZoomSign />
        <FitAll />
        <FitSel />
        <Hand />
        <SelPrev />
        <SelNext />
        <Bookmark />
      </div>
      <span className="ml-[39px]"><Grip /></span>
      <div className="flex items-center gap-[30px] ml-[27px]">
        <Hier />
        <HierMove down />
        <HierMove />
        <HierMove top />
      </div>
      <div className={BUTTON + " ml-[22px] w-[505px] h-[63px] flex items-center pl-[17px]"}>
        <span className="-mt-[5px]"><UpDown /></span>
        <span className={UI + " ml-[11px] tracking-[-0.25px]"}>.../10Bit_Design_Sim/...</span>
      </div>
      <span className="ml-[28px]"><Grip /></span>
      <span className={UI + " ml-[18px] w-[127px] tracking-[0.2px]"}>Sel: 0</span>
      <div className={BUTTON + " w-[239px] h-[60px] flex items-center justify-center " + UI}>full</div>
      <span className="ml-[17px] -mt-[6px]"><SelUndo /></span>
      <span className="ml-[28px] -mt-[6px]"><SelUndo redo /></span>
      <span className="ml-[37px]"><Grip /></span>
    </div>
  );
}

function WireBar() {
  return (
    <div className={"flex items-center h-[100px] border-b-[3px] border-[#b9b7b5] pl-[14px] pt-px " + BAND_Y}>
      <Grip />
      <span className={UI + " ml-[18px] mt-[2px] w-[243px] font-bold text-[36px] tracking-[-0.5px]"}>Wire Name</span>
      <span className="w-[3px] h-[42px] bg-[#d9d5d0] border-r border-white" />
      <span className="ml-[28px] w-[1370px] h-[63px] rounded-[7px] border-2 border-[#a9a5a2] bg-white" />
      <span className="ml-[10px] w-[42px] h-[42px] border-[3px] border-[#c4c0bd] bg-white" />
      <span className={UI + " ml-[13px] mt-[2px] w-[167px]"}>Expand</span>
      <span className="w-[42px] h-[42px] border-[3px] border-[#c4c0bd] bg-white" />
      <span className={UI + " ml-[14px] mt-[2px] tracking-[-0.2px]"}>Polyline</span>
      <div className="ml-auto mr-[12px] flex gap-[4px]">
        <div className={BUTTON + " w-[82px] h-[77px] flex items-center justify-center"}><Help /></div>
        <div className={BUTTON + " w-[66px] h-[77px] flex items-center justify-center pb-[8px]"}><Restore /></div>
        <div className={BUTTON + " w-[33px] h-[77px] flex items-center justify-center"}><Caret /></div>
        <div className={BUTTON + " w-[82px] h-[77px] flex items-center justify-center pb-[12px] pr-[4px]"}><Eject /></div>
      </div>
    </div>
  );
}

function SideBar() {
  return (
    <div className={"w-[129px] h-[974px] shrink-0 flex flex-col border-r-2 border-[#a8a6a2] " + BAND_X}>
      <span className="mt-[17px] ml-[45px]"><Grip horizontal /></span>
      <div className="ml-[39px] flex flex-col">
        <span className="mt-[29px]"><Mos /></span>
        <span className="mt-[41px]"><WireIc /></span>
        <span className="mt-[25px]"><WireName /></span>
        <span className="mt-[32px]"><PinIc /></span>
        <span className="mt-[32px]"><Plug /></span>
      </div>
      <span className="mt-[39px] ml-[45px]"><Grip horizontal /></span>
      <div className="mt-[37px] ml-[24px] flex items-center gap-[18px]">
        <UndoIc />
        <Caret />
      </div>
      <div className="mt-[49px] ml-[24px] flex items-center gap-[18px]">
        <UndoIc redo />
        <Caret dim />
      </div>
      <div className="ml-[39px] mt-[43px] flex flex-col gap-[49px]">
        <GreenBox />
        <GreenBox wide />
      </div>
      <span className="ml-[56px] mt-[44px]"><Chevrons /></span>
      <span className="ml-[45px] mt-[29px]"><Grip horizontal /></span>
      <span className="ml-[45px] mt-[28px]"><Chevrons /></span>
    </div>
  );
}

function StatusBar() {
  return (
    <div className="h-[105px] bg-[#efece6] flex items-center justify-end pr-[15px] pb-px">
      <span className={UI + " tracking-[0.3px] mr-[2px]"}>{"( 007.250,  004.750)"}</span>
      <svg viewBox="0 0 66 45" className="w-[66px] h-[45px] ml-[20px]">
        <rect x="1" y="1" width="64" height="43" rx="2" fill="url(#term)" stroke="#555" strokeWidth="2.5" />
        <path d="M8 9 L24 19 L9 29" stroke="#fff" strokeWidth="4" fill="none" />
        <path d="M25 32H58" stroke="#fff" strokeWidth="3.4" />
      </svg>
      <Caret className="w-[28px] h-[15px] ml-[17px]" />
    </div>
  );
}

function Recorder() {
  return (
    <div className="absolute right-0 top-[445px] w-[27px] h-[149px] rounded-l-[8px] bg-[#22262b] overflow-hidden">
      <svg viewBox="0 0 27 149" className="w-[27px] h-[149px] block">
        <rect x="0.7" y="0.7" width="12.6" height="12.6" fill="none" stroke="#ccc" strokeWidth="1" />
        <path d="M7 2.6 L11.8 7 L10 7.4 L8.6 11 L6.6 9 L3 12 L5 8 L2.4 6.4 L6 5Z" fill="#fff" />
        <path d="M15 2h3M20 2h3M15 14h3M20 14h3M19 8h3" stroke="#4a4d52" strokeWidth="1.6" />
        <path d="M5 26.5 q0 -2 2 -2 h5 l1.5 -2 h6 l1.5 2 h6 V41.5 H7 q-2 0 -2 -2Z" fill="#cfcfcf" />
        <circle cx="16.6" cy="33" r="4.6" fill="none" stroke="#22262b" strokeWidth="1.3" />
        <rect x="3.6" y="57.5" width="16.5" height="16.5" rx="1.5" fill="#cfcfcf" />
        <path d="M20 65.6 L27 58 V73.5Z" fill="#cfcfcf" />
        <path d="M4.5 93 V108.4 H25" stroke="#cfcfcf" strokeWidth="2" fill="none" />
        <rect x="7.6" y="89.6" width="20" height="15.8" rx="1.5" fill="#cfcfcf" />
        <circle cx="13" cy="94" r="1.8" fill="#22262b" />
        <path d="M10.6 102.6 L15 98 L17.4 100 L21.6 94.6 L27 99 V102.6Z" fill="#22262b" />
        <circle cx="16.8" cy="131" r="8.4" fill="none" stroke="#cfcfcf" strokeWidth="5" strokeDasharray="5.2 3.6" />
        <circle cx="16.8" cy="131" r="5.6" fill="none" stroke="#cfcfcf" strokeWidth="4.2" />
      </svg>
    </div>
  );
}

const TASK = "font-['Noto_Sans',sans-serif] text-[36px] leading-none whitespace-pre text-[#4a5355]";

function TaskBar() {
  return (
    <div className="h-[114px] border-t-[3px] border-[#67636a] bg-[linear-gradient(to_bottom,#f1f1f0_0,#f1f1f0_9px,#f0ebef_9px,#f0ebef_46px,#e6e6e6_46px,#e6e6e6_83px,#e8e3e7_83px)] flex items-center pl-[16px]">
      <div className="w-[89px] h-[81px] rounded-[9px] border-2 border-[#bdbcbd] bg-[#f0f0f0] flex items-center justify-center">
        <svg viewBox="0 0 42 42" className="w-[42px] h-[42px]">
          <rect x="20.5" y="3" width="18.5" height="17" fill="none" stroke="#263430" strokeWidth="6" />
          <path d="M12 21.5 H3 V38.5 H20.5 V31" fill="none" stroke="#263430" strokeWidth="6" />
        </svg>
      </div>
      <div className="ml-[17px] w-[787px] h-[93px] rounded-[9px] border-2 border-t-[3px] border-[#bfbebf] bg-[#f0f0f0] flex items-center pl-[20px]">
        <svg viewBox="0 0 66 60" className="w-[66px] h-[60px] shrink-0 -mt-[2px]">
          <rect x="1" y="1" width="64" height="58" rx="3" fill="#c2c1be" stroke="#8f8f8c" strokeWidth="2" />
          <rect x="6" y="8" width="54" height="46" fill="#2c3430" stroke="#111" strokeWidth="1.5" />
          <path d="M12 15 L19 19 L12 23" stroke="#cfd4cf" strokeWidth="2.5" fill="none" />
          <path d="M21 31H30" stroke="#fff" strokeWidth="2.5" />
        </svg>
        <span className={TASK + " ml-[14px] mt-[3px]"}>shalini@sfaltraining:~</span>
      </div>
      <div className="ml-[13px] w-[791px] h-[93px] rounded-[9px] border-2 border-[#bcbbbc] bg-[linear-gradient(to_bottom,#bfbfbf_0,#c9c9c9_14px,#cfcfcf_20px,#cfcfcf_70%,#cbc9cc)] flex items-center pl-[24px]">
        <MosRed className="w-[60px] h-[64px]" />
        <span className={TASK + " ml-[18px] mt-[3px] tracking-[1.4px]"}>13 DAC_design 10Bit_Design_Sim ...</span>
      </div>
      <div className="ml-auto mr-[34px] flex gap-[10px]">
        <div className="w-[158px] h-[80px] bg-[#d0d0d0] pt-[6px] pb-[2px] pr-[2px] rounded-l-[6px]">
          <div className="h-full border-[6px] border-[#8d8d8d] bg-[#f7f7f7]" />
        </div>
        <div className="w-[161px] h-[80px] border-2 border-[#d0d0d0] bg-[#e0e0e0]" />
        <div className="w-[162px] h-[80px] border-2 border-[#d0d0d0] bg-[#e0e0e0]" />
        <div className="w-[162px] h-[80px] border-2 border-[#d0d0d0] bg-[#e0e0e0] rounded-r-[10px]" />
      </div>
    </div>
  );
}

export default function App() {
  return (
    <div className="relative w-[3835px] h-[1567px] overflow-hidden bg-[#5b4a72] flex flex-col">
      <Defs />
      <div className="flex h-[1446px] shrink-0">
        <div className="w-[15px] shrink-0 bg-[linear-gradient(to_right,#6d5a92_0,#6d5a92_3px,#5b4a72_5px)]" />
        <div className="w-[3811px] flex flex-col">
          <TabBar />
          <div className="w-[3811px] flex flex-col bg-[#efece6]">
            <MenuBar />
            <Toolbar />
            <WireBar />
            <div className="flex h-[974px]">
              <SideBar />
              <div className="flex flex-col border-t-2 border-[#e9e6e2] border-b border-b-[#777]">
                <Schematic />
              </div>
            </div>
            <StatusBar />
          </div>
        </div>
      </div>
      <TaskBar />
      <div className="h-[3px] bg-white shrink-0" />
      <div className="h-[4px] shrink-0 flex">
        <span className="w-[144px] bg-[#3d4048]" />
        <span className="w-[1032px] bg-[#c1c1c1]" />
        <span className="w-[591px] bg-[#3b3c44]" />
        <span className="w-[150px] bg-[#70717a]" />
        <span className="flex-1 bg-[#2c3646]" />
      </div>
      <Recorder />
    </div>
  );
}
